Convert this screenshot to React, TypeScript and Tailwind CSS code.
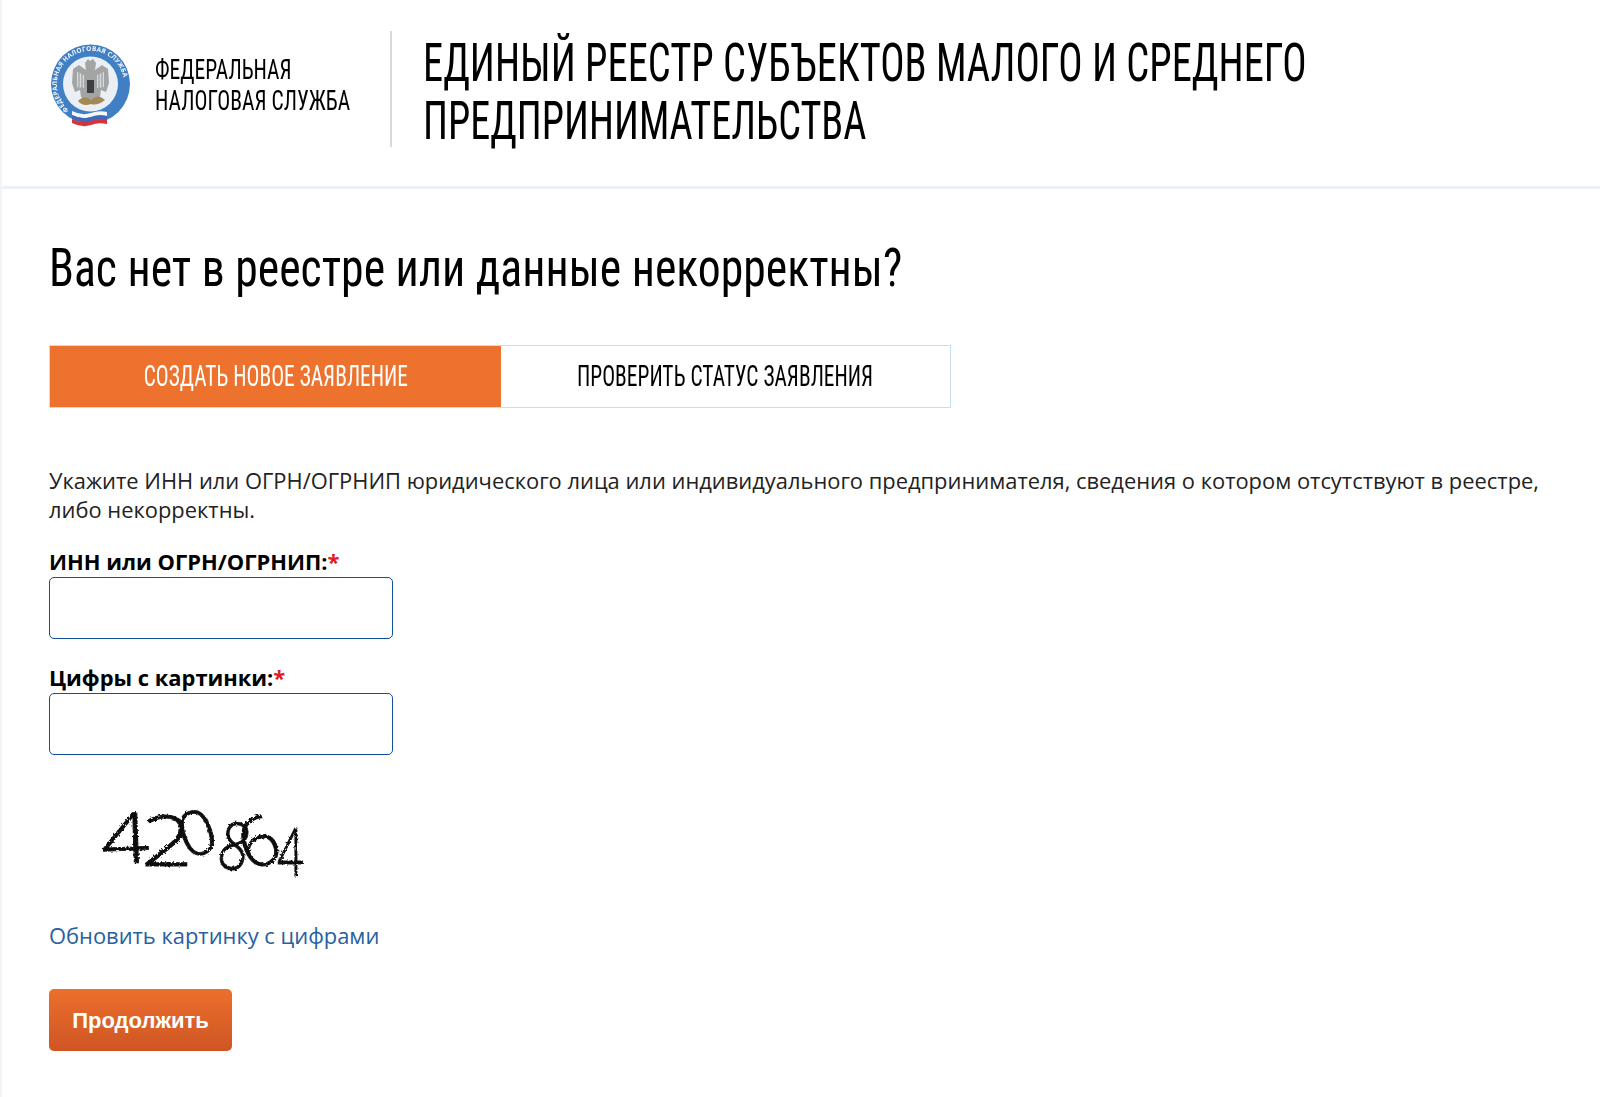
const condensed = "font-['Roboto_Condensed','Roboto','Liberation_Sans',sans-serif]"

function Logo() {
  return (
    <svg width="84" height="86" viewBox="0 0 84 86" className="shrink-0 mb-[6px]">
      <defs>
        <path id="seal-arc" d="M 20 67 A 33.5 33.5 0 1 1 63 67" />
        <filter id="soft">
          <feGaussianBlur stdDeviation="0.55" />
        </filter>
        <filter id="soft-text">
          <feGaussianBlur stdDeviation="0.2" />
        </filter>
      </defs>
      <g filter="url(#soft)">
        <circle cx="41.5" cy="41" r="39.5" fill="#3f7fc4" />
        <circle cx="41.5" cy="41" r="27.5" fill="#e9eff5" />
        {/* eagle */}
        <path d="M41 18 L44 16 L47 20 L46 27 L53 22 L59 26 L60 40 L57 49 L52 47 L51 54 L45 58 L38 58 L32 54 L31 47 L26 49 L23 40 L24 26 L30 22 L37 27 L36 20 L39 16 Z" fill="#a3a5a4" />
        <path d="M28 29 L35 32 L35 45 L28 44 Z M55 29 L48 32 L48 45 L55 44 Z" fill="#d8dadb" />
        <path d="M30 30 L30 44 M33 31 L33 45 M53 30 L53 44 M50 31 L50 45" stroke="#85888a" strokeWidth="0.9" />
        <rect x="38" y="37" width="7" height="13" fill="#3d3f42" />
        <path d="M29 58 Q36 51 42 57 Q49 50 56 57 Q48 63 42 61 Q34 64 29 58 Z" fill="#a38a55" />
        {/* flag */}
        <path d="M23 68 Q33 73 42 70 Q50 67 58 69 L58 73 Q49 71 42 74 Q33 77 23 72 Z" fill="#f6f7fa" />
        <path d="M23 72 Q33 77 42 74 Q49 71 58 73 L58 77 Q49 75 42 78 Q33 81 23 76 Z" fill="#3f68b8" />
        <path d="M23 76 Q33 81 42 78 Q49 75 58 77 L58 81 Q49 79 42 82 Q33 85 23 80 Z" fill="#d8333c" />
      </g>
      <text filter="url(#soft-text)" fill="#f4f7fb" fontSize="6.5" fontWeight="700" letterSpacing="0.2" fontFamily="'Open Sans', sans-serif">
        <textPath href="#seal-arc">ФЕДЕРАЛЬНАЯ НАЛОГОВАЯ СЛУЖБА</textPath>
      </text>
    </svg>
  )
}

function Captcha() {
  const digits = [
    { d: '4', x: 1, y: 56, size: 70, rot: -2, sx: 1.2 },
    { d: '2', x: 40, y: 58, size: 70, rot: 0, sx: 1.3 },
    { d: '0', x: 86, y: 52, size: 62, rot: -20, sx: 1.05 },
    { d: '8', x: 114, y: 58, size: 66, rot: 12, sx: 0.8 },
    { d: '6', x: 148, y: 64, size: 68, rot: -22, sx: 1.02 },
    { d: '4', x: 176, y: 68, size: 66, rot: 0, sx: 0.7 },
  ]
  return (
    <svg width="210" height="74" viewBox="0 0 210 74" className="block overflow-visible">
      <defs>
        <filter id="rough" x="-10%" y="-10%" width="120%" height="120%">
          <feTurbulence type="fractalNoise" baseFrequency="0.5" numOctaves="2" seed="4" />
          <feDisplacementMap in="SourceGraphic" scale="3.5" />
        </filter>
      </defs>
      <g filter="url(#rough)" fontFamily="'Open Sans', sans-serif" fontWeight="300" fill="#111" stroke="#111" strokeWidth="0.9">
        {digits.map((item, index) => (
          <text
            key={index}
            fontSize={item.size}
            transform={`translate(${item.x} ${item.y}) rotate(${item.rot}) scale(${item.sx} 1)`}
          >
            {item.d}
          </text>
        ))}
      </g>
    </svg>
  )
}

export default function App() {
  return (
    <div className="min-h-screen bg-white border-l-2 border-[#f1f4f8] font-['Open_Sans',sans-serif] text-[#111]">
      {/* Header */}
      <header className="h-[189px] border-b-[3px] border-[#eaf1f8] pl-[47px] pb-[8px] flex items-center">
        <Logo />
        <div className={`${condensed} ml-[22px] w-[214px] shrink-0 mb-[8px] text-[28px] leading-[31px] text-black`}>
          <div className="origin-left whitespace-nowrap scale-x-[0.77]">ФЕДЕРАЛЬНАЯ</div>
          <div className="origin-left whitespace-nowrap scale-x-[0.77]">НАЛОГОВАЯ СЛУЖБА</div>
        </div>
        <div className="ml-[21px] w-[2px] h-[116px] shrink-0 bg-[#d8d8d8]" />
        <h2 className={`${condensed} ml-[31px] mt-[5px] text-[54px] leading-[58px] text-black`}>
          <div className="origin-left whitespace-nowrap scale-x-[0.75]">ЕДИНЫЙ РЕЕСТР СУБЪЕКТОВ МАЛОГО И СРЕДНЕГО</div>
          <div className="origin-left whitespace-nowrap scale-x-[0.745]">ПРЕДПРИНИМАТЕЛЬСТВА</div>
        </h2>
      </header>

      <main className="pl-[47px] pr-[40px]">
        <h1 className={`${condensed} mt-[46px] text-[54px] leading-[66px] text-black origin-left whitespace-nowrap scale-x-[0.846]`}>
          Вас нет в реестре или данные некорректны?
        </h1>

        {/* Tabs */}
        <div className={`${condensed} mt-[44px] w-[902px] h-[63px] flex border border-[#c8dff2] text-[30px]`}>
          <div className="w-[451px] pb-[2px] bg-[#ed722d] text-white flex items-center justify-center">
            <span className="whitespace-nowrap scale-x-[0.715]">СОЗДАТЬ НОВОЕ ЗАЯВЛЕНИЕ</span>
          </div>
          <div className="flex-1 pb-[2px] text-black flex items-center justify-center">
            <span className="whitespace-nowrap scale-x-[0.715]">ПРОВЕРИТЬ СТАТУС ЗАЯВЛЕНИЯ</span>
          </div>
        </div>

        <p className="mt-[58px] text-[21.9px] leading-[29px] text-[#222]">
          Укажите ИНН или ОГРН/ОГРНИП юридического лица или индивидуального предпринимателя, сведения о котором
          отсутствуют в реестре, либо некорректны.
        </p>

        <form className="mt-[23px]">
          <label className="block mb-[1px] text-[21.9px] leading-[29px] font-bold text-black">
            ИНН или ОГРН/ОГРНИП:<span className="text-[#e01b1b]">*</span>
          </label>
          <input className="block w-[344px] h-[62px] rounded-[5px] border border-[#10509e] bg-white" />

          <label className="block mt-[24px] mb-[1px] text-[21.9px] leading-[29px] font-bold text-black">
            Цифры с картинки:<span className="text-[#e01b1b]">*</span>
          </label>
          <input className="block w-[344px] h-[62px] rounded-[5px] border border-[#10509e] bg-white" />

          <div className="mt-[53px] ml-[52px]">
            <Captcha />
          </div>

          <a href="#" className="block mt-[39px] text-[21.9px] leading-[29px] text-[#27609f]">
            Обновить картинку с цифрами
          </a>

          <button
            type="button"
            className="block mt-[39px] w-[183px] h-[62px] rounded-[5px] bg-gradient-to-b from-[#ec6f2c] to-[#cf5524] text-white text-[22px] font-bold font-['Liberation_Sans',sans-serif]"
          >
            Продолжить
          </button>
        </form>
      </main>
    </div>
  )
}
